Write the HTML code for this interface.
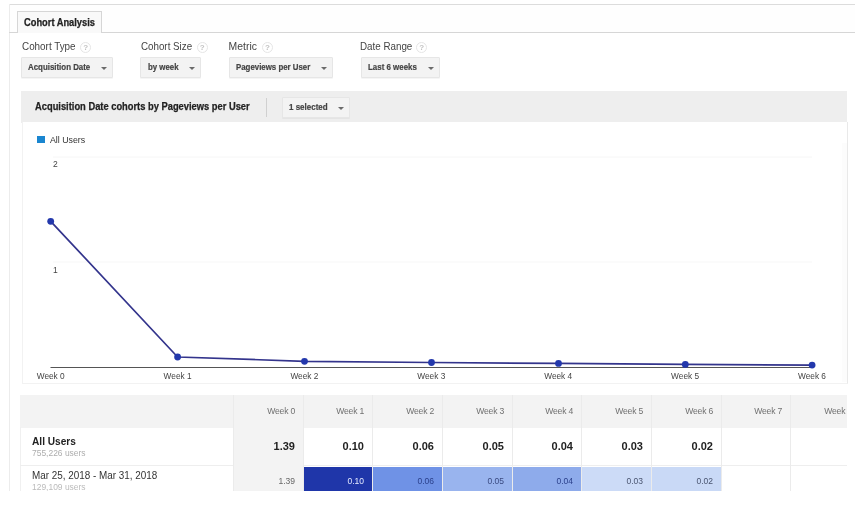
<!DOCTYPE html>
<html><head><meta charset="utf-8">
<style>
*{margin:0;padding:0;box-sizing:border-box}
html,body{width:863px;height:515px;overflow:hidden;background:#fff;}
body{filter:blur(0.35px);font-family:"Liberation Sans",sans-serif;color:#333}
.a{position:absolute;white-space:nowrap}
.b{-webkit-text-stroke:0.25px currentColor}
.line{position:absolute}
.lbl{font-size:10.4px;color:#444;line-height:1;transform-origin:0 0}
.bt{position:absolute;top:0;transform-origin:0 0;white-space:nowrap;-webkit-text-stroke:0.2px currentColor}
.help{position:absolute;width:11px;height:11px;border:1.2px solid #e6e6e6;border-radius:50%;font-size:8px;color:#c2c2c2;text-align:center;line-height:9px;font-weight:bold}
.btn{position:absolute;height:21px;background:#f3f3f3;border:1px solid #e6e6e6;box-shadow:0 1px 0 rgba(0,0,0,0.04);border-radius:1px;font-weight:bold;font-size:8.6px;color:#444;line-height:18px}
.arr{position:absolute;top:8.5px;width:0;height:0;border-left:3px solid transparent;border-right:3px solid transparent;border-top:3px solid #6a6a6a}
.v1{position:absolute;top:46px;font-size:11px;font-weight:bold;color:#222;text-align:right;line-height:1;padding-right:8px;white-space:nowrap}
.v2{position:absolute;top:81.5px;font-size:8.5px;color:#555;text-align:right;line-height:1;padding-right:8px;white-space:nowrap}
.th{position:absolute;top:0;height:32px;font-size:8.6px;letter-spacing:-0.2px;color:#707070;text-align:right;line-height:1;padding-top:12px;padding-right:8px}
</style></head><body>
<!-- outer frame -->
<div class="line" style="left:9px;top:5px;width:846px;height:27px;background:#fefefe"></div>
<div class="line" style="left:9px;top:4px;width:846px;height:1px;background:#dcdcdc"></div>
<div class="line" style="left:9px;top:4px;width:1px;height:487px;background:#ececec"></div>
<!-- tab bar line -->
<div class="line" style="left:9px;top:32px;width:846px;height:1px;background:#d6d6d6"></div>
<div class="a" style="left:17px;top:11px;width:85px;height:22px;background:#f9f9f9;border:1px solid #d6d6d6;border-bottom:none"></div>
<div class="a b" style="left:24.3px;top:18px;font-size:10px;transform:scaleX(0.93);transform-origin:0 0;font-weight:bold;color:#222;line-height:1">Cohort Analysis</div>

<!-- labels -->
<div class="a lbl" style="left:21.8px;top:42px;transform:scaleX(0.95)">Cohort Type</div>
<div class="help" style="left:80.1px;top:41.5px">?</div>
<div class="a lbl" style="left:141.1px;top:42px;transform:scaleX(0.941)">Cohort Size</div>
<div class="help" style="left:196.6px;top:41.5px">?</div>
<div class="a lbl" style="left:228.6px;top:42px">Metric</div>
<div class="help" style="left:261.9px;top:41.5px">?</div>
<div class="a lbl" style="left:360.1px;top:42px;transform:scaleX(0.943)">Date Range</div>
<div class="help" style="left:416.2px;top:41.6px">?</div>

<div class="btn" style="left:21px;top:57px;width:92px"><span class="bt" style="left:6px;transform:scaleX(0.918)">Acquisition Date</span><span class="arr" style="left:78.6px"></span></div>
<div class="btn" style="left:140px;top:57px;width:61px"><span class="bt" style="left:6.8px;transform:scaleX(0.915)">by week</span><span class="arr" style="left:48.4px"></span></div>
<div class="btn" style="left:229px;top:57px;width:104px"><span class="bt" style="left:6px;transform:scaleX(0.915)">Pageviews per User</span><span class="arr" style="left:91px"></span></div>
<div class="btn" style="left:360.5px;top:57px;width:79px"><span class="bt" style="left:6.5px;transform:scaleX(0.921)">Last 6 weeks</span><span class="arr" style="left:66px"></span></div>

<!-- chart header band -->
<div class="a" style="left:21.2px;top:90.5px;width:826.3px;height:32.5px;background:#eeeeee"></div>
<div class="a b" style="left:34.9px;top:102px;font-size:10px;transform:scaleX(0.933);transform-origin:0 0;font-weight:bold;color:#222;line-height:1">Acquisition Date cohorts by Pageviews per User</div>
<div class="line" style="left:266px;top:98px;width:1px;height:19px;background:#d0d0d0"></div>
<div class="btn" style="left:282px;top:97px;width:67.5px;height:21px"><span class="bt" style="left:6.2px;transform:scaleX(0.929)">1 selected</span><span class="arr" style="left:55.3px"></span></div>

<!-- chart area -->
<div class="a" style="left:21.5px;top:122px;width:826px;height:262px;border:1px solid #f2f2f2;border-right-color:#e9e9e9;border-top:none;background:#fff"></div>
<div class="a" style="left:842px;top:143px;width:5px;height:239px;background:#fcfcfc"></div>
<div class="a" style="left:37px;top:135.5px;width:8px;height:7.5px;background:#1a86d0"></div>
<div class="a" style="left:49.5px;top:135.5px;font-size:9.3px;transform:scaleX(0.946);transform-origin:0 0;color:#333;line-height:1">All Users</div>

<svg class="a" style="left:0;top:0" width="863" height="515" viewBox="0 0 863 515">
  <line x1="53" y1="157" x2="812" y2="157" stroke="#f6f6f6" stroke-width="1"/>
  <line x1="53" y1="262" x2="812" y2="262" stroke="#f7f7f7" stroke-width="1"/>
  <line x1="50.5" y1="367.5" x2="812" y2="367.5" stroke="#555" stroke-width="1"/>
  <polyline fill="none" stroke="#33348c" stroke-width="1.7" points="50.7,221.3 177.6,357 304.5,361.3 431.5,362.5 558.5,363.4 685.3,364.4 812.1,365.1"/>
  <g fill="#2338ac">
    <circle cx="50.7" cy="221.3" r="3.4"/>
    <circle cx="177.6" cy="357" r="3.4"/>
    <circle cx="304.5" cy="361.3" r="3.4"/>
    <circle cx="431.5" cy="362.5" r="3.4"/>
    <circle cx="558.5" cy="363.4" r="3.4"/>
    <circle cx="685.3" cy="364.4" r="3.4"/>
    <circle cx="812.1" cy="365.1" r="3.4"/>
  </g>
  <g font-family="Liberation Sans" font-size="8.5" fill="#444">
    <text x="53" y="167">2</text>
    <text x="53" y="272.5">1</text>
  </g>
  <g font-family="Liberation Sans" font-size="8.3" fill="#444" text-anchor="middle">
    <text x="50.7" y="378.7">Week 0</text>
    <text x="177.6" y="378.7">Week 1</text>
    <text x="304.4" y="378.7">Week 2</text>
    <text x="431.3" y="378.7">Week 3</text>
    <text x="558.2" y="378.7">Week 4</text>
    <text x="685.1" y="378.7">Week 5</text>
    <text x="812" y="378.7">Week 6</text>
  </g>
</svg>

<!-- table -->
<div class="a" style="left:20px;top:395px;width:827px;height:96px;overflow:hidden;background:#fff">
  <div class="a" style="left:0;top:0;width:827px;height:32.5px;background:#f3f3f3"></div>
  <div class="a" style="left:0;top:32px;width:1px;height:64px;background:#f0f0f0"></div>
  <div class="a" style="left:0;top:70px;width:827px;height:1px;background:#eeeeee"></div>
  <div class="a" style="left:213px;top:0;width:70px;height:96px;background:#f3f3f3"></div>
  <div class="a" style="left:283px;top:71.5px;width:69px;height:24.5px;background:#1f36a9"></div>
  <div class="a" style="left:352px;top:71.5px;width:70px;height:24.5px;background:#6f92e6"></div>
  <div class="a" style="left:422px;top:71.5px;width:70px;height:24.5px;background:#99b4ee"></div>
  <div class="a" style="left:492px;top:71.5px;width:69px;height:24.5px;background:#8eabeb"></div>
  <div class="a" style="left:561px;top:71.5px;width:70px;height:24.5px;background:#ccdbf7"></div>
  <div class="a" style="left:631px;top:71.5px;width:70px;height:24.5px;background:#c9d9f6"></div>
  <div class="a" style="left:213px;top:0;width:1px;height:96px;background:#ebebeb"></div>
  <div class="a" style="left:283px;top:0;width:1px;height:96px;background:#ebebeb"></div>
  <div class="a" style="left:352px;top:0;width:1px;height:96px;background:#ebebeb"></div>
  <div class="a" style="left:422px;top:0;width:1px;height:96px;background:#ebebeb"></div>
  <div class="a" style="left:492px;top:0;width:1px;height:96px;background:#ebebeb"></div>
  <div class="a" style="left:561px;top:0;width:1px;height:96px;background:#ebebeb"></div>
  <div class="a" style="left:631px;top:0;width:1px;height:96px;background:#ebebeb"></div>
  <div class="a" style="left:701px;top:0;width:1px;height:96px;background:#ebebeb"></div>
  <div class="a" style="left:770px;top:0;width:1px;height:96px;background:#ebebeb"></div>
  <div class="th" style="left:213px;width:70px">Week 0</div>
  <div class="th" style="left:283px;width:69px">Week 1</div>
  <div class="th" style="left:352px;width:70px">Week 2</div>
  <div class="th" style="left:422px;width:70px">Week 3</div>
  <div class="th" style="left:492px;width:69px">Week 4</div>
  <div class="th" style="left:561px;width:70px">Week 5</div>
  <div class="th" style="left:631px;width:70px">Week 6</div>
  <div class="th" style="left:701px;width:69px">Week 7</div>
  <div class="th" style="left:770px;width:70px">Week 8</div>
  <div class="a" style="left:12px;top:42px;font-size:10.15px;font-weight:bold;color:#222;line-height:1">All Users</div>
  <div class="a" style="left:12px;top:54px;font-size:8.46px;color:#adadad;line-height:1">755,226 users</div>
  <div class="v1" style="left:213px;width:70px">1.39</div>
  <div class="v1" style="left:283px;width:69px">0.10</div>
  <div class="v1" style="left:352px;width:70px">0.06</div>
  <div class="v1" style="left:422px;width:70px">0.05</div>
  <div class="v1" style="left:492px;width:69px">0.04</div>
  <div class="v1" style="left:561px;width:70px">0.03</div>
  <div class="v1" style="left:631px;width:70px">0.02</div>
  <div class="a" style="left:11.6px;top:76px;font-size:10.3px;transform:scaleX(0.96);transform-origin:0 0;color:#333;line-height:1">Mar 25, 2018 - Mar 31, 2018</div>
  <div class="a" style="left:12px;top:88px;font-size:8.46px;color:#bbb;line-height:1">129,109 users</div>
  <div class="v2" style="left:213px;width:70px;color:#666">1.39</div>
  <div class="v2" style="left:283px;width:69px;color:#e6ebff">0.10</div>
  <div class="v2" style="left:352px;width:70px;color:#2a3f8a">0.06</div>
  <div class="v2" style="left:422px;width:70px;color:#3a4a80">0.05</div>
  <div class="v2" style="left:492px;width:69px;color:#2a3f8a">0.04</div>
  <div class="v2" style="left:561px;width:70px;color:#4a5570">0.03</div>
  <div class="v2" style="left:631px;width:70px;color:#4a5570">0.02</div>
</div>
</body></html>
